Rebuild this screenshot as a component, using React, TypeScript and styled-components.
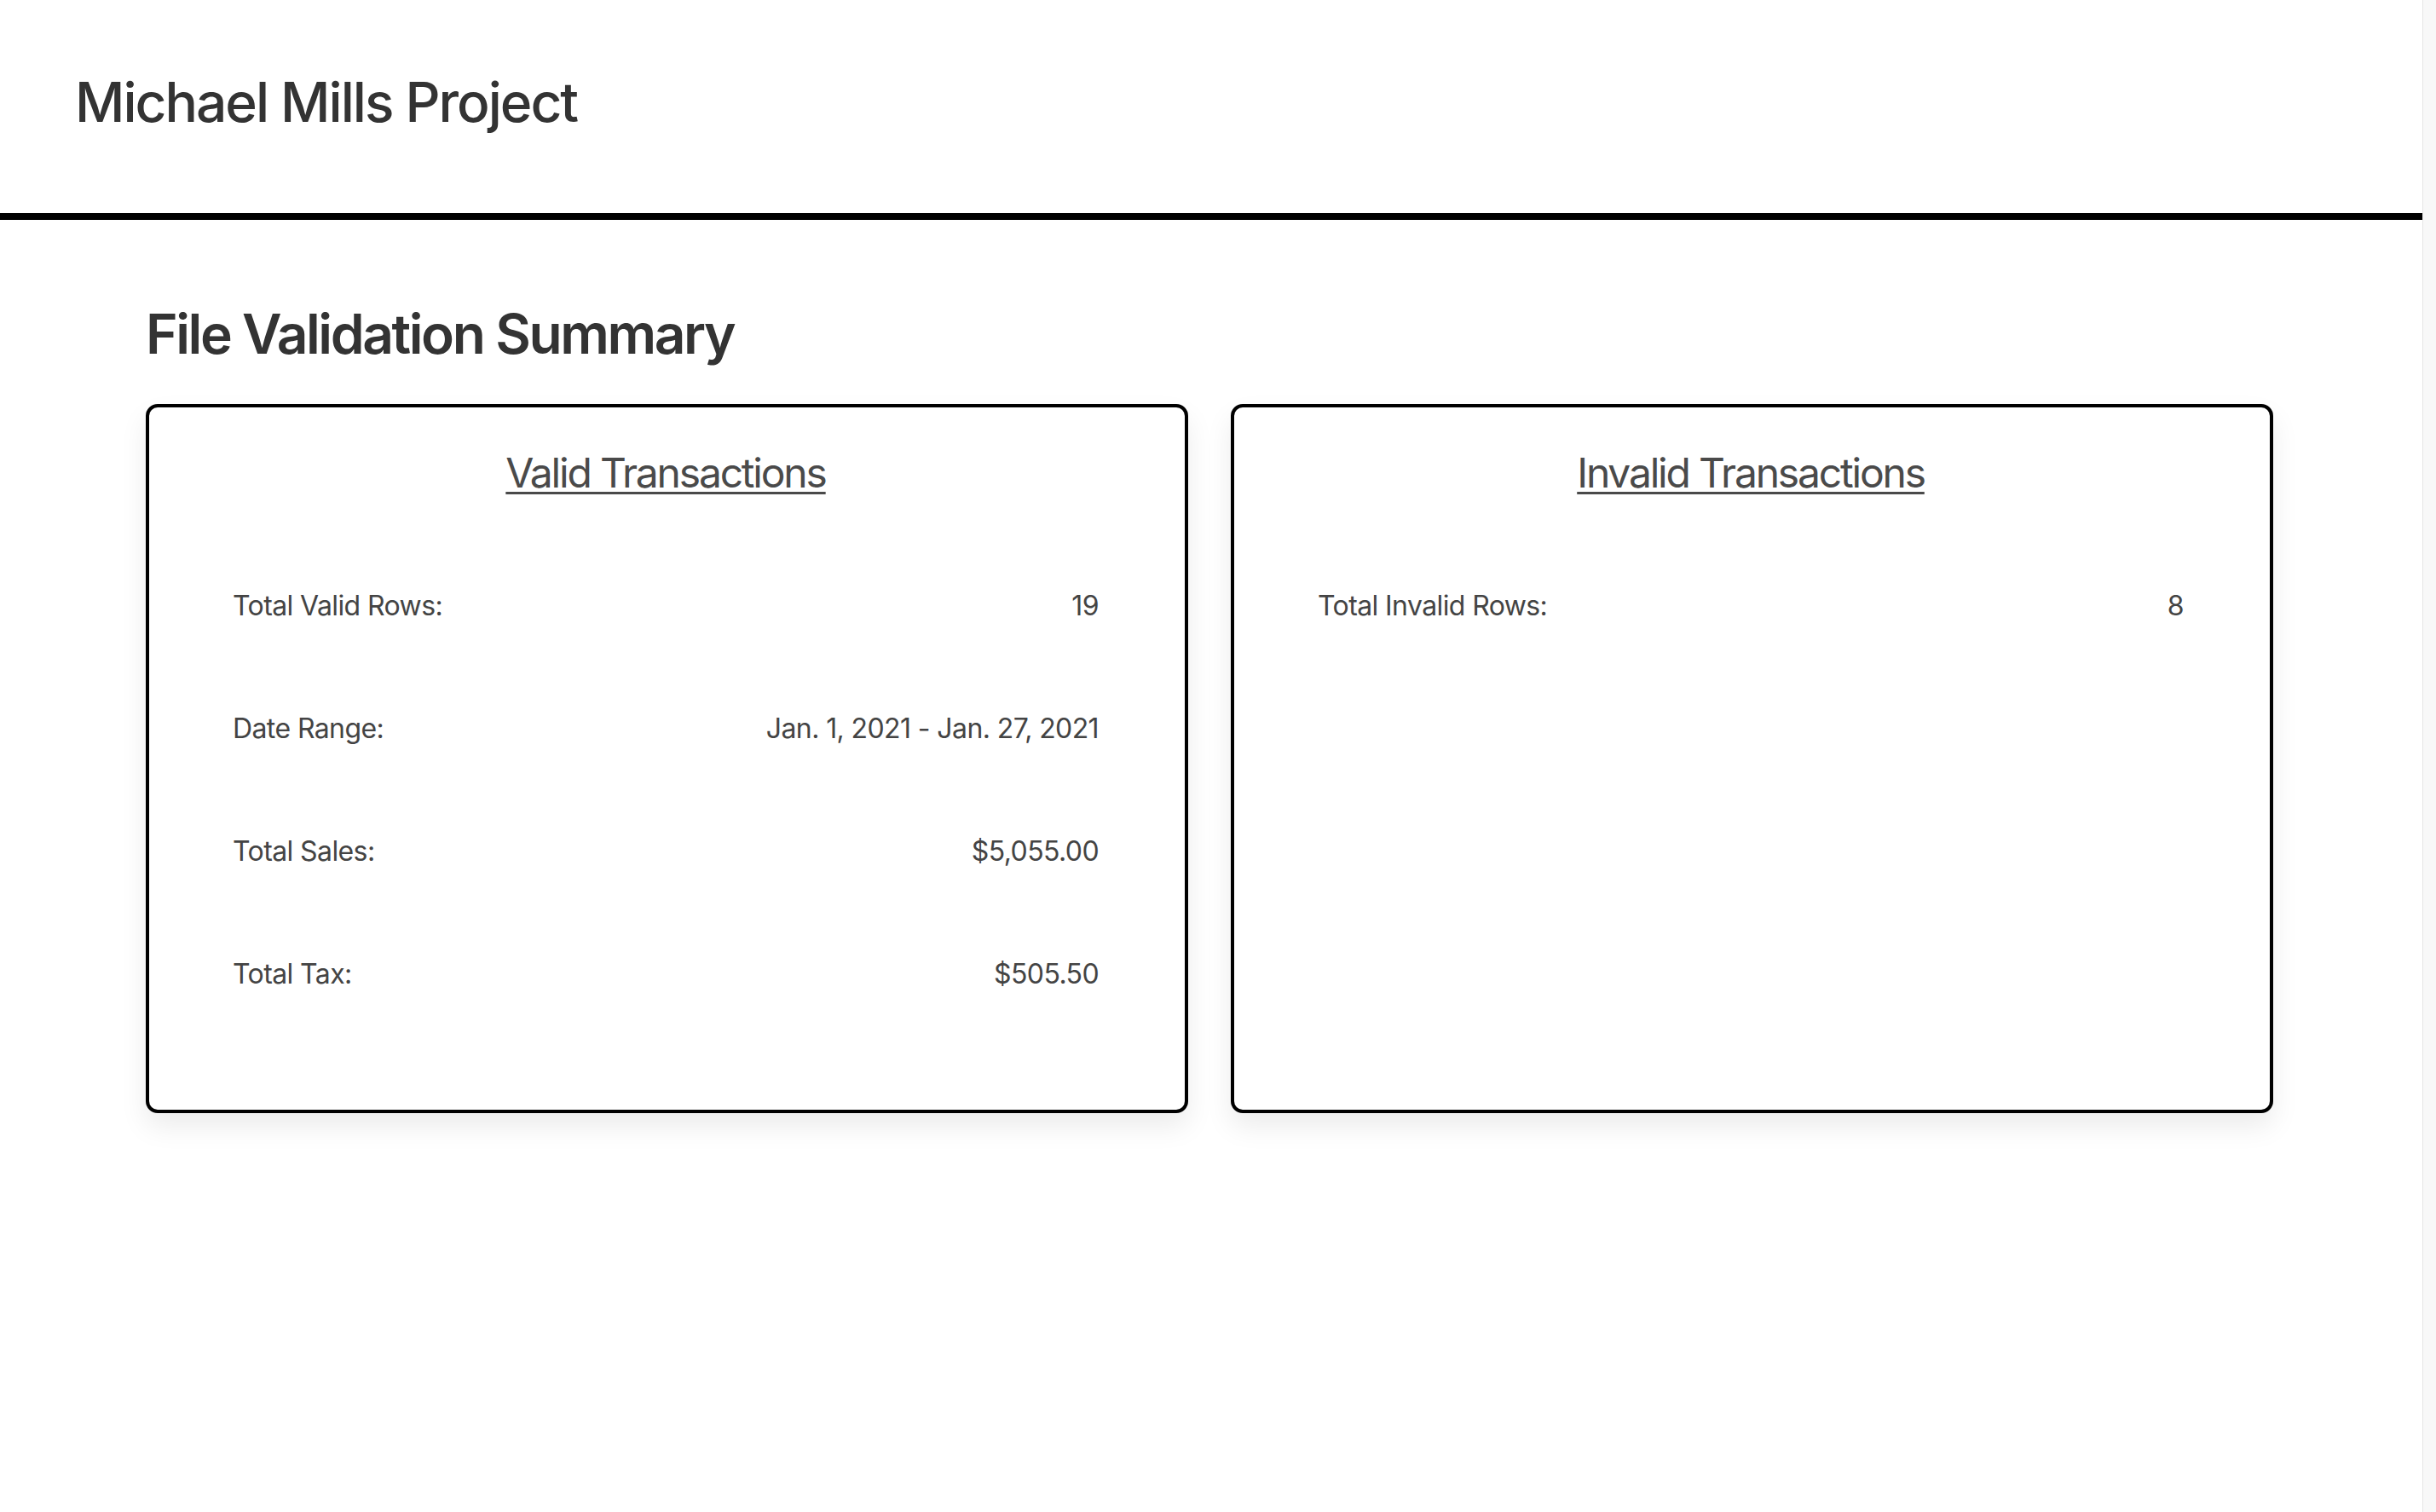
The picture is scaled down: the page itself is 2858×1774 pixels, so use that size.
import React from 'react';
import styled, { createGlobalStyle } from 'styled-components';

const GlobalStyle = createGlobalStyle`
  * {
    box-sizing: border-box;
  }

  body {
    margin: 0;
    background: #ffffff;
    font-family: Inter, 'Noto Sans', 'Liberation Sans', sans-serif;
    color: #333333;
  }
`;

const StyledLayout = styled.div`
  display: flex;
  min-height: 100vh;
`;

const StyledPage = styled.div`
  flex: 1;
  min-width: 0;
`;

const StyledGutter = styled.div`
  width: 16px;
  flex-shrink: 0;
  background: #f8f8f8;
  border-left: 1px solid #e6e6e6;
`;

const StyledHeader = styled.header`
  padding: 88px 88px 98px;
  border-bottom: 8px solid #000000;
`;

const StyledBrand = styled.h1`
  margin: 0;
  font-size: 64px;
  line-height: 64px;
  font-weight: 500;
  letter-spacing: -2px;
  color: #333333;
`;

const StyledMain = styled.main`
  padding: 102px 0 0 171px;
`;

const StyledTitle = styled.h2`
  margin: 0 0 50px;
  font-size: 64px;
  line-height: 64px;
  font-weight: 600;
  letter-spacing: -2.4px;
  color: #333333;
`;

const StyledGrid = styled.div`
  width: 2496px;
  display: grid;
  grid-template-columns: 1fr 1fr;
  gap: 50px;
`;

const StyledCard = styled.section`
  height: 832px;
  padding: 53px 101px 0 98px;
  background: #ffffff;
  border: 4px solid #000000;
  border-radius: 14px;
  box-shadow: 0 16px 32px rgba(0, 0, 0, 0.08);
`;

const StyledCardTitle = styled.h3`
  margin: 0 0 60px;
  text-align: center;
  font-size: 48px;
  line-height: 48px;
  font-weight: 400;
  letter-spacing: -2.2px;
  color: #4a4a4a;
  text-decoration: underline;
  text-decoration-thickness: 3px;
  text-underline-offset: 5px;
`;

const StyledRow = styled.div`
  display: flex;
  justify-content: space-between;
  align-items: center;
  padding: 56px 0;
  font-size: 32px;
  line-height: 32px;
  letter-spacing: -0.6px;
  color: #444444;
`;

interface SummaryRow {
  label: string;
  value: string;
}

interface SummaryCardProps {
  title: string;
  rows: SummaryRow[];
}

const SummaryCard = ({ title, rows }: SummaryCardProps) => {
  return (
    <StyledCard>
      <StyledCardTitle>{title}</StyledCardTitle>
      {rows.map((row) => (
        <StyledRow key={row.label}>
          <span>{row.label}</span>
          <span>{row.value}</span>
        </StyledRow>
      ))}
    </StyledCard>
  );
};

const validRows: SummaryRow[] = [
  { label: 'Total Valid Rows:', value: '19' },
  { label: 'Date Range:', value: 'Jan. 1, 2021 - Jan. 27, 2021' },
  { label: 'Total Sales:', value: '$5,055.00' },
  { label: 'Total Tax:', value: '$505.50' },
];

const invalidRows: SummaryRow[] = [
  { label: 'Total Invalid Rows:', value: '8' },
];

const App = () => {
  return (
    <>
      <GlobalStyle />
      <StyledLayout>
        <StyledPage>
          <StyledHeader>
            <StyledBrand>Michael Mills Project</StyledBrand>
          </StyledHeader>
          <StyledMain>
            <StyledTitle>File Validation Summary</StyledTitle>
            <StyledGrid>
              <SummaryCard title="Valid Transactions" rows={validRows} />
              <SummaryCard title="Invalid Transactions" rows={invalidRows} />
            </StyledGrid>
          </StyledMain>
        </StyledPage>
        <StyledGutter />
      </StyledLayout>
    </>
  );
};

export default App;
